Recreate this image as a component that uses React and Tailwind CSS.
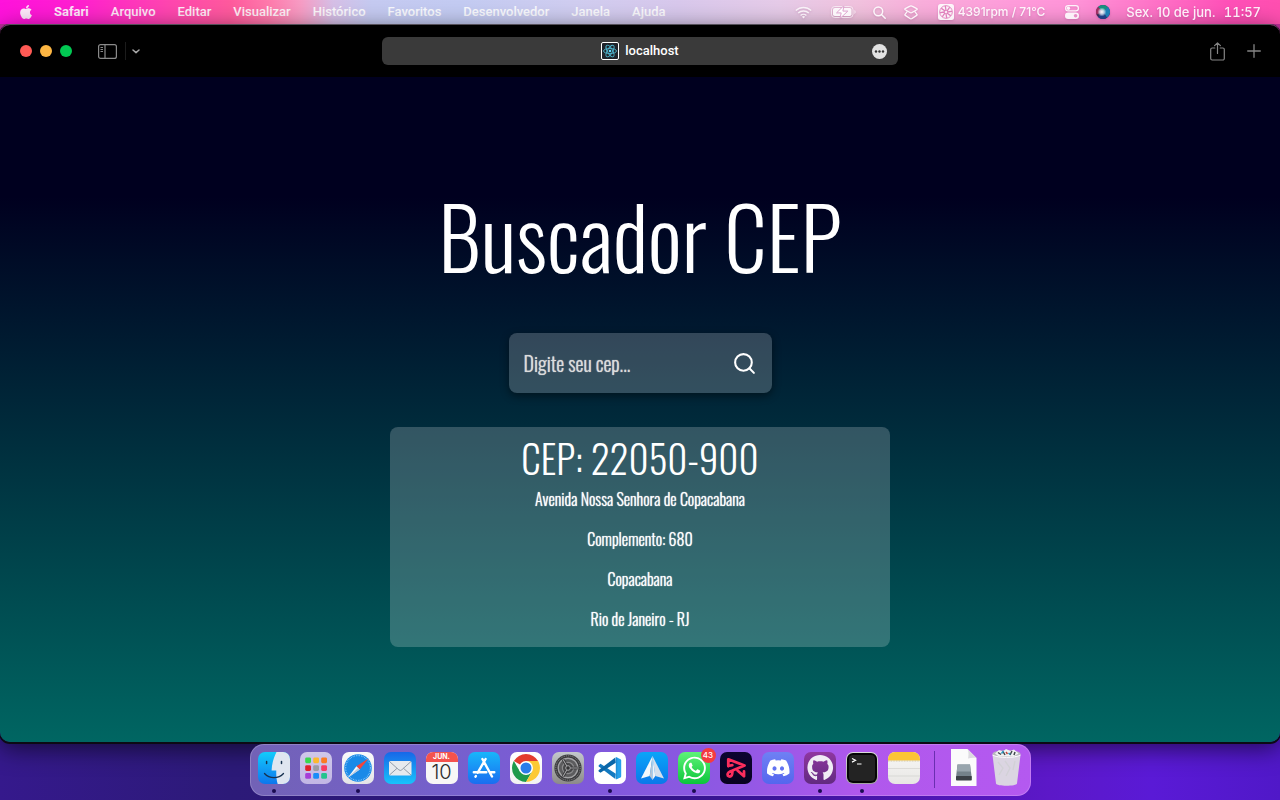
import { FaApple, FaWhatsapp, FaDiscord, FaGithub } from "react-icons/fa";
import { FiSearch } from "react-icons/fi";

const menus = ["Arquivo", "Editar", "Visualizar", "Histórico", "Favoritos", "Desenvolvedor", "Janela", "Ajuda"];

const address = ["Avenida Nossa Senhora de Copacabana", "Complemento: 680", "Copacabana", "Rio de Janeiro - RJ"];

function WifiIcon() {
  return (
    <svg viewBox="0 0 17 13" className="h-[13px] w-[17px]" fill="none" stroke="currentColor" strokeWidth="1.4">
      <path d="M0.8 4.6a11 11 0 0 1 15.4 0" />
      <path d="M3.2 7.1a7.6 7.6 0 0 1 10.6 0" />
      <path d="M5.6 9.5a4.2 4.2 0 0 1 5.8 0" />
      <path d="M8.5 12.4l-1.6-1.6a2.3 2.3 0 0 1 3.2 0z" fill="currentColor" stroke="none" />
    </svg>
  );
}

function BatteryIcon() {
  return (
    <svg viewBox="0 0 25 12" className="h-3 w-[25px]" fill="none">
      <rect x="0.5" y="0.5" width="21.5" height="11" rx="3.2" stroke="currentColor" strokeOpacity="0.7" />
      <rect x="2" y="2" width="18.5" height="8" rx="1.8" fill="currentColor" />
      <path d="M23.3 4v4c.9-.3 1.4-1 1.4-2s-.5-1.7-1.4-2z" fill="currentColor" opacity="0.6" />
      <path d="M13 -0.500L5.500 6.900h4.700L9 12.500l7.800-7.400h-4.900z" fill="white" stroke="#dda3cf" strokeWidth="1" />
    </svg>
  );
}

function LensIcon() {
  return (
    <svg viewBox="0 0 13 13" className="size-[13px]" fill="none" stroke="currentColor" strokeWidth="1.5" strokeLinecap="round">
      <circle cx="5.3" cy="5.3" r="4.4" />
      <path d="M8.7 8.7l3.5 3.5" />
    </svg>
  );
}

function StackIcon() {
  return (
    <svg viewBox="0 0 14 15" className="h-[15px] w-[14px]" fill="none" stroke="currentColor" strokeWidth="1.3" strokeLinejoin="round">
      <path d="M6 1.1a2 2 0 0 1 2 0l4.800 2.500c.5.300.5.900 0 1.200L8 7.500a2 2 0 0 1-2 0L1.200 4.800c-.5-.3-.5-.9 0-1.200z" />
      <path d="M3.400 6.300L1.200 9.100c-.5.500-.4 1 .1 1.300L6 13.500a2 2 0 0 0 2 0l4.700-3.100c.5-.3.6-.8.1-1.300l-2.200-2.800" />
    </svg>
  );
}

function FanIcon() {
  return (
    <svg viewBox="0 0 16 16" className="size-4" fill="none">
      <rect width="16" height="16" rx="2.5" fill="currentColor" />
      <circle cx="8" cy="8" r="6.3" stroke="#e387c0" strokeWidth="1" />
      <g stroke="#e07fbb" strokeWidth="1.3" strokeLinecap="round">
        <path d="M8 6.300L7.400 2.500M9.200 6.800l2.200-3.100M9.700 8l3.800-.6M9.200 9.200l3.100 2.200M8 9.700l.6 3.800M6.800 9.200l-2.200 3.100M6.300 8l-3.800.6M6.800 6.800L3.700 4.600" />
      </g>
    </svg>
  );
}

function ControlsIcon() {
  return (
    <svg viewBox="0 0 14 14" className="size-[14px]" fill="none">
      <rect x="0.6" y="0.6" width="12.8" height="5.3" rx="2.65" stroke="currentColor" strokeWidth="1.2" />
      <circle cx="3.4" cy="3.25" r="1.7" fill="currentColor" />
      <rect x="0" y="7.5" width="14" height="6.4" rx="3.2" fill="currentColor" />
      <circle cx="10.6" cy="10.7" r="1.8" fill="#e88fc8" />
    </svg>
  );
}

function SiriIcon() {
  return (
    <svg viewBox="0 0 14 14" className="size-[14px]">
      <defs>
        <radialGradient id="siriCore" cx="0.42" cy="0.5" r="0.32">
          <stop offset="0" stopColor="#fff" />
          <stop offset="0.5" stopColor="#d8e4f4" stopOpacity="0.8" />
          <stop offset="1" stopColor="#d8e4f4" stopOpacity="0" />
        </radialGradient>
      </defs>
      <circle cx="7" cy="7" r="7" fill="#3a2a55" />
      <path d="M7 7L2 2a7 7 0 0 1 10.5.8z" fill="#17907e" />
      <path d="M7 7l5-5a7 7 0 0 1-1 10.700z" fill="#1b7fb5" />
      <path d="M7 7l4 5.700A7 7 0 0 1 2 12z" fill="#1c3f86" />
      <path d="M7 7L.5 9.500A7 7 0 0 1 2 2.100z" fill="#a02d62" />
      <circle cx="7" cy="7" r="7" fill="url(#siriCore)" />
    </svg>
  );
}

function MenuBar() {
  return (
    <header className="flex h-6 items-center justify-between bg-[linear-gradient(90deg,#ff12dc_0%,#ff1fd0_6%,#ff45b0_13%,#ff5a9d_18%,#ff7aac_21%,#f79cc4_23.5%,#d6bfe6_26%,#c5caf1_29%,#c3cbf2_36%,#d0cdf0_45%,#d8c8ec_53%,#e6cbe8_61%,#f1c2de_67%,#f9aedb_72%,#ff9cdb_79%,#ff94d8_84%,#ff74c8_90%,#ff50b8_96%,#ff4fb0_100%)] pr-[19px] pl-5 font-[Roboto,sans-serif] text-[13px] leading-6 font-medium text-white/90">
      <nav aria-label="Safari" className="flex items-center gap-[22px]">
        <button type="button" aria-label="Apple" className="flex w-3 justify-center">
          <FaApple className="size-4 shrink-0" />
        </button>
        <button type="button" className="font-bold">Safari</button>
        {menus.map((m) => (
          <button type="button" key={m}>{m}</button>
        ))}
      </nav>
      <div className="flex items-center font-[Inter,sans-serif] drop-shadow-[0_1px_1px_rgba(120,40,100,0.25)]">
        <button type="button" aria-label="Wi-Fi" className="mr-[19px] text-white/80"><WifiIcon /></button>
        <button type="button" aria-label="Bateria" className="mr-[17px]"><BatteryIcon /></button>
        <button type="button" aria-label="Buscar" className="mr-[18px]"><LensIcon /></button>
        <button type="button" aria-label="Camadas" className="mr-5"><StackIcon /></button>
        <button type="button" className="mr-5 flex items-center gap-1 text-xs"><FanIcon />4391rpm / 71°C</button>
        <button type="button" aria-label="Central de Controle" className="mr-[17px]"><ControlsIcon /></button>
        <button type="button" aria-label="Siri" className="mr-4"><SiriIcon /></button>
        <button type="button" className="flex gap-2"><span>Sex. 10 de jun.</span><span className="tabular-nums">11:57</span></button>
      </div>
    </header>
  );
}

function Toolbar() {
  return (
    <div className="flex h-[52px] items-center justify-between gap-4 bg-black px-[19px] font-medium">
      <div className="flex flex-1 items-center">
        <div className="flex gap-2 pl-px">
          <button type="button" aria-label="Fechar" className="size-3 rounded-full bg-[#ff5a55]" />
          <button type="button" aria-label="Minimizar" className="size-3 rounded-full bg-[#fdb643]" />
          <button type="button" aria-label="Ampliar" className="size-3 rounded-full bg-[#02c953]" />
        </div>
        <button type="button" aria-label="Barra lateral" className="ml-[26px] text-[#8a8a8a]">
          <svg viewBox="0 0 19 15" className="h-[15px] w-[19px]" fill="none" stroke="currentColor">
            <rect x="0.6" y="0.6" width="17.8" height="13.8" rx="2" strokeWidth="1.2" />
            <path d="M7 0.6v13.8" strokeWidth="1.2" />
            <path d="M2.5 3.5h2.5M2.500 5.500h2.500M2.500 7.500h2.500" />
          </svg>
        </button>
        <div className="ml-2 h-[18px] w-px bg-[#1c1c1c]" />
        <button type="button" aria-label="Grupos de abas" className="ml-1.5 text-[#a8a8a8]">
          <svg viewBox="0 0 8 5" className="h-[5px] w-2" fill="none" stroke="currentColor" strokeWidth="1.5" strokeLinecap="round" strokeLinejoin="round">
            <path d="M1 1l3 2.600L7 1" />
          </svg>
        </button>
      </div>
      <div className="flex h-7 w-[516px] shrink items-center justify-between rounded-md bg-[#3a3a3a] px-[11px] font-[Roboto,sans-serif] text-[13px] text-white">
        <span className="w-[15px]" />
        <button type="button" className="flex items-center gap-1.5">
          <svg viewBox="0 0 18 18" className="size-[18px]" fill="none">
            <rect x="0.5" y="0.5" width="17" height="17" rx="1.5" fill="#20242b" stroke="#fff" />
            <g stroke="#4fb4cc" strokeWidth="0.9">
              <ellipse cx="9" cy="9" rx="6.5" ry="2.6" />
              <ellipse cx="9" cy="9" rx="6.5" ry="2.6" transform="rotate(60 9 9)" />
              <ellipse cx="9" cy="9" rx="6.5" ry="2.6" transform="rotate(120 9 9)" />
            </g>
            <circle cx="9" cy="9" r="1.3" fill="#61dafb" />
          </svg>
          localhost
        </button>
        <button type="button" aria-label="Mais">
          <svg viewBox="0 0 15 15" className="size-[15px]">
            <circle cx="7.5" cy="7.5" r="7.5" fill="#e2e2e2" />
            <g fill="#333">
              <circle cx="4" cy="7.5" r="1.2" />
              <circle cx="7.5" cy="7.5" r="1.2" />
              <circle cx="11" cy="7.5" r="1.2" />
            </g>
          </svg>
        </button>
      </div>
      <div className="flex flex-1 items-center justify-end gap-[22px] text-[#858585]">
        <button type="button" aria-label="Compartilhar">
          <svg viewBox="0 0 15 19" className="h-[19px] w-[15px]" fill="none" stroke="currentColor" strokeWidth="1.2" strokeLinecap="round" strokeLinejoin="round">
            <path d="M4.800 6H2.200A1.500 1.500 0 0 0 .7 7.500v9A1.500 1.500 0 0 0 2.200 18h10.600a1.500 1.500 0 0 0 1.500-1.500v-9A1.500 1.500 0 0 0 12.800 6h-2.600" />
            <path d="M7.500 11.500V1M4.600 3.700L7.500.8l2.900 2.900" />
          </svg>
        </button>
        <button type="button" aria-label="Nova aba">
          <svg viewBox="0 0 14 14" className="size-[14px]" stroke="currentColor" strokeWidth="1.3" strokeLinecap="round">
            <path d="M7 .7v12.600M.7 7h12.600" />
          </svg>
        </button>
      </div>
    </div>
  );
}

function Page() {
  return (
    <main className="flex flex-1 flex-col items-center justify-center bg-[linear-gradient(180deg,#00001f_18%,#006662_100%)] font-[Oswald,'Roboto_Condensed',sans-serif] font-light text-white">
      <h1 className="text-[85px] leading-[127px]">Buscador CEP</h1>
      <form className="mt-[34px] flex h-[60px] w-[263px] items-center justify-between rounded-lg bg-white/20 px-[15px] shadow-[0_3px_8px_rgba(0,0,0,0.45)]" onSubmit={(e) => e.preventDefault()}>
        <input type="text" aria-label="CEP" placeholder="Digite seu cep..." className="w-[180px] bg-transparent text-xl leading-7 outline-none [text-shadow:0_0_1px_#dcdcdc] placeholder:text-[#dcdcdc]" />
        <button type="submit" aria-label="Buscar"><FiSearch className="size-[25px]" /></button>
      </form>
      <section className="mt-[34px] flex w-[500px] flex-col items-center rounded-lg bg-white/20 py-2">
        <h2 className="text-[39px] leading-[44px]">CEP: 22050-900</h2>
        {address.map((line) => (
          <p key={line} className="text-base leading-10 [text-shadow:0_0_1px_#ffffff]">{line}</p>
        ))}
      </section>
    </main>
  );
}

function Tile({ id, from, to, children }) {
  return (
    <svg viewBox="0 0 32 32" className="size-8">
      <defs>
        <linearGradient id={id} x1="0" y1="0" x2="0" y2="1">
          <stop offset="0" stopColor={from} />
          <stop offset="1" stopColor={to} />
        </linearGradient>
        <clipPath id={id + "Clip"}><rect width="32" height="32" rx="7" /></clipPath>
      </defs>
      <g clipPath={"url(#" + id + "Clip)"}>
        <rect width="32" height="32" fill={"url(#" + id + ")"} />
        {children}
      </g>
    </svg>
  );
}

const finder = (
  <Tile id="finder" from="#12cbfb" to="#0d76ee">
    <path d="M18.500 0C15.500 6 13.800 12 13.600 18.500h4.700c-.2 5 .2 9.500 1.400 13.500H32V0z" fill="#dfe6f0" />
    <path d="M8.600 9.500v2M23.500 9.500v2" stroke="#17324f" strokeWidth="1.5" strokeLinecap="round" />
    <path d="M6.500 21.500c5 5.500 14 5.500 19 0" stroke="#17324f" strokeWidth="1.3" fill="none" strokeLinecap="round" />
  </Tile>
);

const padColors = ["#38d84f", "#fdb92e", "#fb7a24", "#e0202c", "#9b9ba3", "#f83a64", "#a63ed8", "#1a8cf8", "#24c48e"];
const launchpad = (
  <Tile id="launchpad" from="#cfc8ea" to="#c2b6e4">
    {padColors.map((c, i) => (
      <rect key={c} x={5.2 + (i % 3) * 8} y={5.4 + Math.floor(i / 3) * 7.8} width="5.8" height="5.8" rx="1.4" fill={c} />
    ))}
  </Tile>
);

const safari = (
  <Tile id="safari" from="#fbfbfb" to="#e4e4e6">
    <circle cx="16" cy="16" r="13.8" fill="#1a8ae8" />
    <circle cx="16" cy="16" r="12.4" fill="none" stroke="#d7edff" strokeOpacity="0.8" strokeWidth="1.2" strokeDasharray="0.6 1.1" />
    <path d="M26.500 6.500L14.400 14.300l3.300 3.300z" fill="#f5453b" />
    <path d="M5.500 26l8.900-11.700 3.300 3.300z" fill="#f6f8fb" />
    <path d="M5.500 26L16 16l1.700 1.600z" fill="#bccbdd" />
  </Tile>
);

const mail = (
  <Tile id="mail" from="#1767e8" to="#18c3fb">
    <rect x="5" y="9" width="22.5" height="14.5" rx="1.5" fill="#e6eaee" />
    <path d="M5.500 9.500l9.300 8.300a2.200 2.200 0 0 0 3 0l9.200-8.300M5.500 23l7.500-6.700M27 23l-7.500-6.700" stroke="#8894a2" strokeWidth="0.9" fill="none" />
  </Tile>
);

const calendar = (
  <span className="flex size-8 flex-col overflow-hidden rounded-[7px] bg-[#f8f7f6] text-center">
    <span className="bg-[#f4524d] text-[7px] leading-[10px] font-bold text-white">JUN.</span>
    <span className="font-[Inter,sans-serif] text-[20px] leading-[21px] font-light text-[#2b2b2b]">10</span>
  </span>
);

const appStore = (
  <Tile id="store" from="#18b6fa" to="#1a6df0">
    <g stroke="#fff" strokeWidth="2.4" strokeLinecap="round" fill="none">
      <path d="M17.600 7L9.600 20.800M14.400 7l9.600 17.500M5.800 20.300h12.500M23 20.300h3.300M7.900 24l-.4.7" />
    </g>
  </Tile>
);

const chrome = (
  <Tile id="chrome" from="#ffffff" to="#f2f2f2">
    <path d="M16 16L3.880 9A14 14 0 0 1 28.120 9z" fill="#e33b2e" />
    <path d="M3.880 9A14 14 0 0 0 16 30l6.060-10.500L16 16l-6.060 3.500z" fill="#1e9a4b" />
    <path d="M16 9h12.120A14 14 0 0 1 16 30l6.060-10.500z" fill="#fcc934" />
    <circle cx="16" cy="16" r="7" fill="#fff" />
    <circle cx="16" cy="16" r="5.5" fill="#2a7de9" />
  </Tile>
);

const settings = (
  <Tile id="settings" from="#c3c8cc" to="#8c8a88">
    <circle cx="16" cy="16" r="13.6" fill="#3b3b3d" />
    <circle cx="16" cy="16" r="12.2" fill="none" stroke="#8e8e90" strokeWidth="1" strokeDasharray="1 0.9" />
    <circle cx="16" cy="16" r="9.8" fill="#5c5c5e" stroke="#a2a2a4" strokeWidth="1.4" />
    <circle cx="16" cy="16" r="5.6" fill="#48484a" stroke="#8b8b8d" strokeWidth="1.2" />
    <path d="M18.300 16H26M14.800 18L11 24.600M14.800 14L11 7.400" stroke="#2f2f31" strokeWidth="2.6" />
    <path d="M18.300 16H26M14.800 18L11 24.600M14.800 14L11 7.400" stroke="#a5a5a7" strokeWidth="1.1" />
    <circle cx="16" cy="16" r="2.3" fill="#333335" stroke="#a5a5a7" strokeWidth="1" />
  </Tile>
);

const code = (
  <Tile id="code" from="#ffffff" to="#ffffff">
    <path d="M6.500 11.800L4.800 13.200c-.4.4-.4.9 0 1.300L21.300 27l.5-5.300z" fill="#1279c0" />
    <path d="M6.500 20.800l-1.700-1.400c-.4-.4-.4-.9 0-1.300L21.300 5.500l.5 5.200z" fill="#0a66a8" />
    <path d="M21.300 5.300c.3-.3.8-.3 1.200-.1l4 2c.5.2.7.6.7 1.100v16c0 .5-.3.9-.7 1.100l-4 1.900c-.4.2-.9.1-1.200-.2.6.2 1-.2 1-.9V6.300c0-.7-.5-1.200-1-1z" fill="#25a0ea" />
    <path d="M21.800 5.800h1.500v21h-1.500z" fill="#1c8fd8" />
  </Tile>
);

const spark = (
  <Tile id="spark" from="#0aa5f8" to="#0a78ea">
    <path d="M16.500 4L5 26.500l8.700-2.600z" fill="#f4f8fc" />
    <path d="M16.500 4L28 26.500l-8.700-2.600z" fill="#d3dfec" />
    <path d="M16.500 4l-2.800 19.900 2.800 4.100z" fill="#b4c4d5" />
    <path d="M16.500 4l2.800 19.900-2.800 4.100z" fill="#eef3f8" />
  </Tile>
);

const whatsapp = (
  <Tile id="whats" from="#5ef478" to="#0cc53b">
    <FaWhatsapp x="3.5" y="3" size="26" color="#fff" />
  </Tile>
);

const resso = (
  <Tile id="resso" from="#0c0430" to="#08021f">
    <g fill="none" stroke="#fb2d5c" strokeWidth="2.8" strokeLinejoin="round" strokeLinecap="round">
      <path d="M8.300 14V7.300L24.500 13.500 12.500 18.500C9.500 19.500 7.600 20.500 7.600 22.400c0 1.800 2 2.600 3.400 1.700 1-.6 1.300-1.800 1.400-4.600" />
      <path d="M17.500 18.500l6.500 5.700v-4.700" />
      <path d="M8.300 14l4-.8" />
    </g>
  </Tile>
);

const discord = (
  <Tile id="discord" from="#6f80f4" to="#5566ee">
    <FaDiscord x="4" y="3.5" size="24.5" color="#fff" />
  </Tile>
);

const github = (
  <Tile id="github" from="#8f37a0" to="#622a80">
    <FaGithub x="3" y="2.5" size="26.5" color="#f0ecf5" />
  </Tile>
);

const terminal = (
  <Tile id="terminal" from="#dadada" to="#a2a2a2">
    <rect x="1" y="1" width="30" height="30" rx="6" fill="#050505" />
    <rect x="3" y="3" width="26" height="26" rx="4" fill="#232323" />
    <path d="M6 6.500l3.500 1.800L6 10.100" stroke="#fff" strokeWidth="1.2" fill="none" />
    <path d="M11 12h4.500" stroke="#fff" strokeWidth="1.2" />
  </Tile>
);

const notes = (
  <Tile id="notes" from="#f8f8f6" to="#e8e6e4">
    <rect width="32" height="8.5" fill="#fcc536" />
    <path d="M0 9h32" stroke="#c4b48c" strokeWidth="0.8" strokeDasharray="0.8 0.8" />
    <path d="M0 16.500h32M0 24h32" stroke="#cfcdca" strokeWidth="0.6" />
  </Tile>
);

const apps = [
  { name: "Finder", icon: finder, open: true },
  { name: "Launchpad", icon: launchpad },
  { name: "Safari", icon: safari, open: true },
  { name: "Mail", icon: mail },
  { name: "Calendário", icon: calendar },
  { name: "App Store", icon: appStore },
  { name: "Chrome", icon: chrome },
  { name: "Ajustes", icon: settings },
  { name: "Visual Studio Code", icon: code, open: true },
  { name: "Spark", icon: spark },
  { name: "WhatsApp", icon: whatsapp, open: true, badge: "43" },
  { name: "Resso", icon: resso },
  { name: "Discord", icon: discord },
  { name: "GitHub", icon: github, open: true },
  { name: "Terminal", icon: terminal, open: true },
  { name: "Notas", icon: notes },
];

function FileIcon() {
  return (
    <svg viewBox="0 0 32 40" className="h-10 w-8">
      <path d="M2 1h16.500l9 9V38H2z" fill="#fbfbfb" />
      <path d="M18.500 1c1.500 3.500 1 7 .5 9.500 3-.8 6-.8 8.500-.5z" fill="#dddbe0" />
      <path d="M8.500 16.500H21l1.700 13H7z" fill="#74828a" />
      <path d="M8.500 16.500H21l.9 7H7.800z" fill="#98a5ad" />
      <rect x="7" y="28" width="15.800" height="4.500" rx="0.8" fill="#3b4146" />
    </svg>
  );
}

function TrashIcon() {
  return (
    <svg viewBox="0 0 32 40" className="h-10 w-8">
      <ellipse cx="15.500" cy="6" rx="14" ry="3.800" fill="#b9b9be" />
      <path d="M4 5.500l4-3.500 4 1.500 3-2.500 4.500 2L23 1.500l4.500 4-5 3H8z" fill="#f1f1f3" />
      <path d="M7 4.500l3 2M12 3.500l2 3.500M21 3l-2 4M24 4l-1 3" stroke="#40464c" strokeWidth="1.5" />
      <path d="M10.500 5.500l2-2.500M17.500 5l1.800 1.500" stroke="#2f9ac0" strokeWidth="1.6" />
      <path d="M15 4l1.500 2" stroke="#c04438" strokeWidth="1.4" />
      <path d="M1.500 7c5 3.200 23 3.200 28 0L26 35.500c-.3 3-20.700 3-21 0z" fill="#dddce0" fillOpacity="0.95" />
      <path d="M7 14l5 6-4 7M14 13l5 7-4 8M24 13l-2 9" stroke="#d2d1d6" strokeWidth="1.3" fill="none" />
      <path d="M1.500 7c5 3.200 23 3.200 28 0" stroke="#fff" strokeWidth="1" fill="none" />
    </svg>
  );
}

function Dock() {
  return (
    <footer className="flex h-[58px] justify-center pt-0.5">
      <div className="flex h-[52px] items-start gap-2.5 rounded-[14px] bg-[linear-gradient(90deg,#7262b6_0%,#7560cc_25%,#8058dc_45%,#9058e4_62%,#b058ec_78%,#b459f0_100%)] px-2 ring-1 ring-white/20 ring-inset">
        {apps.map((app) => (
          <button type="button" key={app.name} aria-label={app.name} className="relative flex flex-col items-center pt-2">
            {app.icon}
            {app.open && <span className="mt-[5px] size-1 rounded-full bg-[#1a0b52]" />}
            {app.badge && (
              <span className="absolute top-1 -right-1.5 size-[15px] rounded-full bg-[#f63b3f] text-[8px] leading-[15px] font-medium text-white">{app.badge}</span>
            )}
          </button>
        ))}
        <div className="mx-1 mt-[7px] h-[37px] w-px bg-[#6a2fb0]" />
        <button type="button" aria-label="Downloads" className="pt-1"><FileIcon /></button>
        <button type="button" aria-label="Lixo" className="pt-1"><TrashIcon /></button>
      </div>
    </footer>
  );
}

export default function App() {
  return (
    <div className="flex min-h-screen flex-col bg-[linear-gradient(90deg,#35198c_0%,#2c1a78_18%,#2a1478_40%,#3c149a_60%,#5c18c8_82%,#5a1ad6_90%,#5018c8_100%)] font-[Inter,'Open_Sans',sans-serif]">
      <MenuBar />
      <div className="flex flex-1 flex-col bg-[linear-gradient(180deg,#c0309c_0px,#c0309c_20px,transparent_40px)]">
        <div className="flex flex-1 flex-col overflow-hidden rounded-[10px] border-t border-[#55505a] shadow-[0_1px_0_1px_#0c0a14,0_6px_24px_rgba(0,0,0,0.6)]">
          <Toolbar />
          <Page />
        </div>
      </div>
      <Dock />
    </div>
  );
}
